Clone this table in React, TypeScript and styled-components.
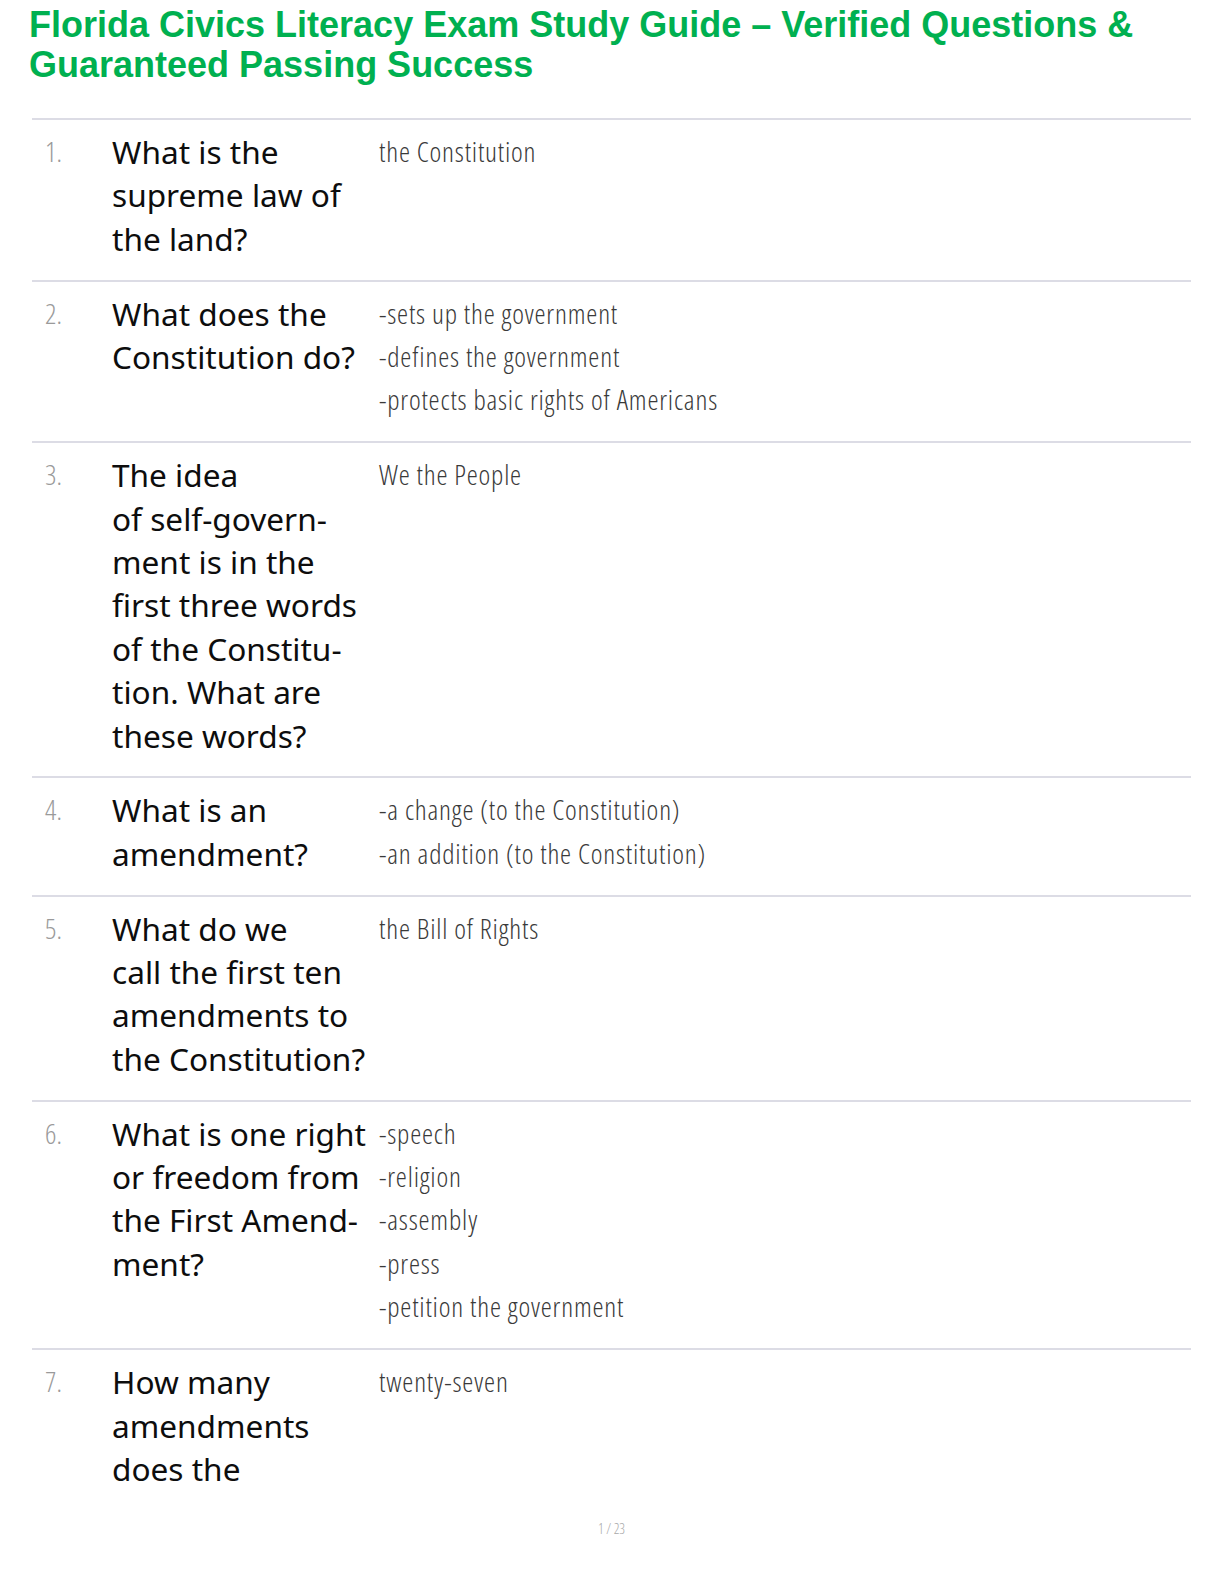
import React from 'react';
import styled, { createGlobalStyle } from 'styled-components';

// 기본 여백 제거
const GlobalStyle = createGlobalStyle`
  body {
    margin: 0;
    background: #fff;
  }
`;

const Page = styled.main`
  width: 1224px;
  box-sizing: border-box;
  padding: 5px 33px 0 32px;
`;

const Title = styled.h1`
  margin: 0 0 33px -3px;
  font-family: 'Liberation Sans', Arial, sans-serif;
  font-weight: 700;
  font-size: 36px;
  line-height: 40px;
  color: #00b050;
`;

const List = styled.section`
  border-top: 2px solid #dcdce5;
`;

const Row = styled.div<{ $last?: boolean }>`
  display: grid;
  grid-template-columns: 80px 267px 1fr;
  padding: 10px 0 19.4px;
  border-bottom: ${p => (p.$last ? 'none' : '2px solid #dcdce5')};
`;

// 번호 / 답: 얇은 condensed 폰트
const Num = styled.div`
  padding-left: 13px;
  font-family: 'Open Sans', 'Noto Sans', sans-serif;
  font-weight: 300;
  font-stretch: 75%;
  font-size: 28px;
  line-height: 43.4px;
  color: #9a9a9a;
`;

const Question = styled.div`
  font-family: 'Noto Sans', 'Open Sans', sans-serif;
  font-weight: 400;
  font-size: 31.6px;
  line-height: 43.4px;
  color: #0d0d0d;
`;

const Answer = styled.div`
  font-family: 'Open Sans', 'Noto Sans', sans-serif;
  font-weight: 300;
  font-stretch: 75%;
  font-size: 28px;
  letter-spacing: 0.8px;
  line-height: 43.4px;
  color: #3a3a3a;
`;

const Line = styled.div`
  white-space: nowrap;
`;

const Footer = styled.footer`
  margin-top: 11px;
  text-align: center;
  font-family: 'Open Sans', sans-serif;
  font-weight: 300;
  font-stretch: 75%;
  font-size: 14px;
  line-height: 16px;
  color: #a8a8a8;
`;

type Item = { q: string[]; a: string[] };

const ITEMS: Item[] = [
  { q: ['What is the', 'supreme law of', 'the land?'], a: ['the Constitution'] },
  {
    q: ['What does the', 'Constitution do?'],
    a: ['-sets up the government', '-defines the government', '-protects basic rights of Americans'],
  },
  {
    q: [
      'The idea',
      'of self-govern-',
      'ment is in the',
      'first three words',
      'of the Constitu-',
      'tion. What are',
      'these words?',
    ],
    a: ['We the People'],
  },
  { q: ['What is an', 'amendment?'], a: ['-a change (to the Constitution)', '-an addition (to the Constitution)'] },
  {
    q: ['What do we', 'call the first ten', 'amendments to', 'the Constitution?'],
    a: ['the Bill of Rights'],
  },
  {
    q: ['What is one right', 'or freedom from', 'the First Amend-', 'ment?'],
    a: ['-speech', '-religion', '-assembly', '-press', '-petition the government'],
  },
  { q: ['How many', 'amendments', 'does the'], a: ['twenty-seven'] },
];

function App() {
  return (
    <Page>
      <GlobalStyle />
      <Title>Florida Civics Literacy Exam Study Guide – Verified Questions &amp; Guaranteed Passing Success</Title>

      <List>
        {ITEMS.map((item, i) => (
          <Row key={i} $last={i === ITEMS.length - 1}>
            <Num>{i + 1}.</Num>
            <Question>
              {item.q.map(l => (
                <Line key={l}>{l}</Line>
              ))}
            </Question>
            <Answer>
              {item.a.map(l => (
                <Line key={l}>{l}</Line>
              ))}
            </Answer>
          </Row>
        ))}
      </List>

      <Footer>1 / 23</Footer>
    </Page>
  );
}

export default App;
